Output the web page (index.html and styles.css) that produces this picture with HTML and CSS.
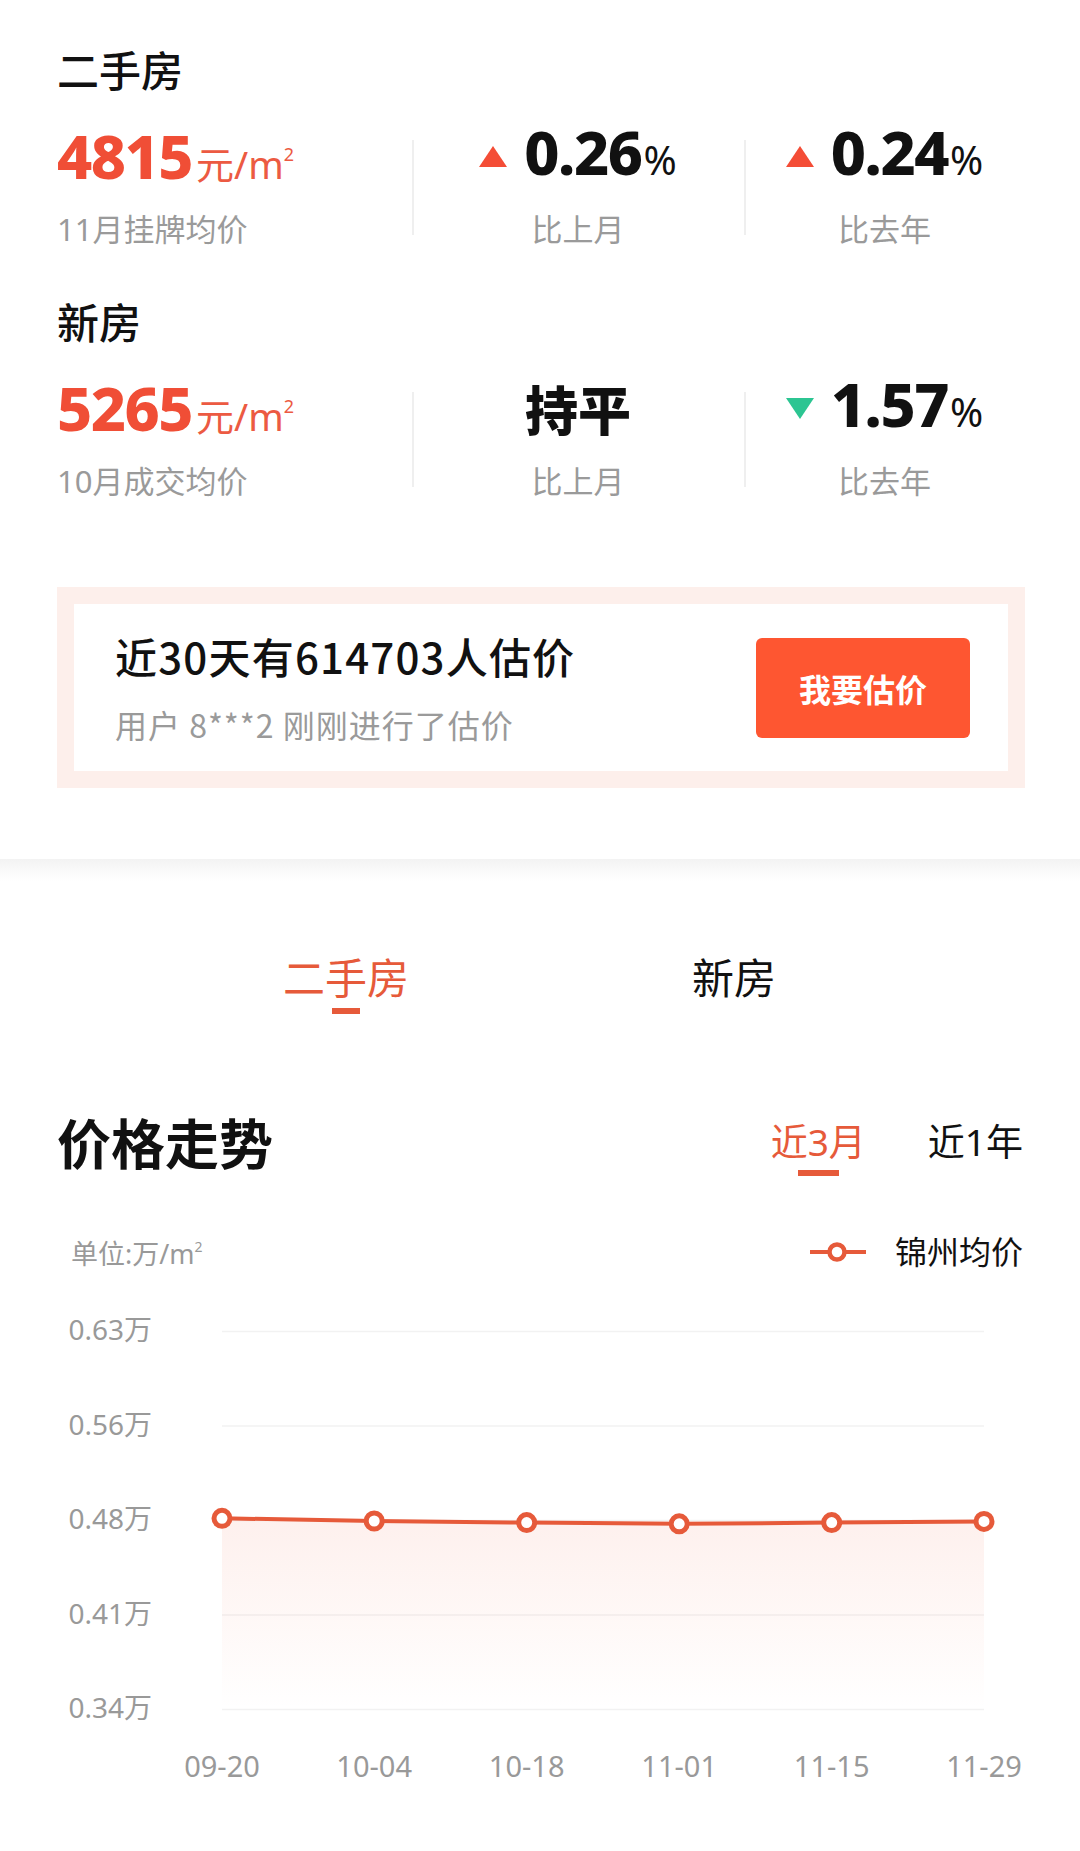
FILE: index.html
```html
<!DOCTYPE html>
<html lang="zh-CN">
<head>
  <meta charset="UTF-8" />
  <meta name="viewport" content="width=device-width, initial-scale=1.0"/>
  <title>锦州房价</title>
  <link rel="stylesheet" href="styles.css">
</head>
<body>

  <!-- 房价概览 -->
  <div class="overview">
    <h2 class="block-title">二手房</h2>
    <div class="stats">
      <div class="stat stat-main">
        <div class="value red">4815<span class="unit">元/m<sup>2</sup></span></div>
        <div class="label">11月挂牌均价</div>
      </div>
      <div class="stat">
        <div class="value">
          <svg class="arrow" width="28" height="21" viewBox="0 0 28 21"><polygon points="14,0 28,21 0,21" fill="#f44d36"/></svg>
          <span>0.26<span class="pct">%</span></span>
        </div>
        <div class="label">比上月</div>
      </div>
      <div class="stat">
        <div class="value">
          <svg class="arrow" width="28" height="21" viewBox="0 0 28 21"><polygon points="14,0 28,21 0,21" fill="#f44d36"/></svg>
          <span>0.24<span class="pct">%</span></span>
        </div>
        <div class="label">比去年</div>
      </div>
    </div>

    <h2 class="block-title">新房</h2>
    <div class="stats">
      <div class="stat stat-main">
        <div class="value red">5265<span class="unit">元/m<sup>2</sup></span></div>
        <div class="label">10月成交均价</div>
      </div>
      <div class="stat">
        <div class="value flat">持平</div>
        <div class="label">比上月</div>
      </div>
      <div class="stat">
        <div class="value">
          <svg class="arrow" width="28" height="21" viewBox="0 0 28 21"><polygon points="0,0 28,0 14,21" fill="#2cc592"/></svg>
          <span>1.57<span class="pct">%</span></span>
        </div>
        <div class="label">比去年</div>
      </div>
    </div>

    <div class="estimate">
      <div class="estimate-inner">
        <div class="estimate-text">
          <div class="estimate-title">近30天有614703人估价</div>
          <div class="estimate-sub">用户 8***2 刚刚进行了估价</div>
        </div>
        <button class="estimate-btn">我要估价</button>
      </div>
    </div>
  </div>

  <div class="band"></div>

  <!-- 房源类型 -->
  <div class="tabs">
    <div class="tab active">二手房<i class="bar"></i></div>
    <div class="tab">新房</div>
  </div>

  <!-- 价格走势 -->
  <div class="trend">
    <div class="trend-head">
      <h2 class="trend-title">价格走势</h2>
      <div class="range">
        <div class="range-item active">近3月<i class="bar"></i></div>
        <div class="range-item">近1年</div>
      </div>
    </div>
    <div class="chart-meta">
      <span class="unit-note">单位:万/m<sup>2</sup></span>
      <span class="legend">
        <svg width="56" height="22" viewBox="0 0 56 22">
          <line x1="0" y1="11" x2="56" y2="11" stroke="#e65a3a" stroke-width="4"/>
          <circle cx="27" cy="11" r="7.5" fill="#fff" stroke="#e65a3a" stroke-width="4.5"/>
        </svg>
        锦州均价
      </span>
    </div>
  </div>

  <svg class="chart" width="1080" height="500" viewBox="0 0 1080 500">
    <defs>
      <linearGradient id="area" x1="0" y1="0" x2="0" y2="1">
        <stop offset="0" stop-color="#f25a3a" stop-opacity="0.09"/>
        <stop offset="1" stop-color="#f25a3a" stop-opacity="0"/>
      </linearGradient>
    </defs>

    <g class="grid">
      <line x1="222" y1="31.5" x2="984" y2="31.5"/>
      <line x1="222" y1="126" x2="984" y2="126"/>
      <line x1="222" y1="220.5" x2="984" y2="220.5"/>
      <line x1="222" y1="315" x2="984" y2="315"/>
      <line x1="222" y1="409.5" x2="984" y2="409.5"/>
    </g>

    <g class="axis-y">
      <text x="152" y="40">0.63万</text>
      <text x="152" y="134.5">0.56万</text>
      <text x="152" y="229">0.48万</text>
      <text x="152" y="323.5">0.41万</text>
      <text x="152" y="418">0.34万</text>
    </g>

    <polygon fill="url(#area)" points="222,218.3 374.2,221 526.7,222.6 679.2,223.8 831.7,222.6 984,221.4 984,409.5 222,409.5"/>
    <polyline class="line" points="222,218.3 374.2,221 526.7,222.6 679.2,223.8 831.7,222.6 984,221.4"/>
    <g class="dots">
      <circle cx="222" cy="218.3" r="8"/>
      <circle cx="374.2" cy="221" r="8"/>
      <circle cx="526.7" cy="222.6" r="8"/>
      <circle cx="679.2" cy="223.8" r="8"/>
      <circle cx="831.7" cy="222.6" r="8"/>
      <circle cx="984" cy="221.4" r="8"/>
    </g>

    <g class="axis-x">
      <text x="222" y="477">09-20</text>
      <text x="374.2" y="477">10-04</text>
      <text x="526.7" y="477">10-18</text>
      <text x="679.2" y="477">11-01</text>
      <text x="831.7" y="477">11-15</text>
      <text x="984" y="477">11-29</text>
    </g>
  </svg>

</body>
</html>
```

FILE: styles.css
```css
body {
  margin: 0;
  padding: 0;
  background: #fff;
  color: #111;
  font-family: "Noto Sans", "Noto Sans CJK SC", sans-serif;
}

.overview {
  padding: 50px 55px 0 57px;
}

.block-title {
  margin: 0 0 34px;
  font-size: 42px;
  line-height: 42px;
  font-weight: 500;
  color: #111;
}

.stats {
  display: grid;
  grid-template-columns: 355px 332px 1fr;
  margin-bottom: 57px;
}

.stat {
  text-align: center;
  background: linear-gradient(#efefef, #efefef) left 14px / 2px 95px no-repeat;
}

.stat-main {
  text-align: left;
  background: none;
}

.value {
  display: inline-flex;
  align-items: center;
  gap: 17px;
  height: 60px;
  font-size: 61px;
  line-height: 60px;
  font-weight: 800;
  letter-spacing: -1.5px;
  color: #111;
}

.value.red {
  align-items: baseline;
  gap: 0;
  color: #f04e36;
}

.value .unit {
  margin-left: 4px;
  font-size: 38px;
  font-weight: 400;
  letter-spacing: 0;
  color: #ec5a42;
}

.value .unit sup {
  font-size: 18px;
  vertical-align: 18px;
  line-height: 0;
}

.value .pct {
  margin-left: 2px;
  font-size: 40px;
  font-weight: 400;
  letter-spacing: 0;
}

.value.flat {
  font-family: "Noto Sans CJK SC", sans-serif;
  font-size: 53px;
  font-weight: 900;
  letter-spacing: 0;
}

.label {
  margin-top: 28px;
  font-size: 31px;
  line-height: 31px;
  color: #9a9a9a;
}

/* 估价卡片 */
.estimate {
  margin-top: 90px;
  background: #fdefeb;
  padding: 17px;
}

.estimate-inner {
  display: flex;
  align-items: center;
  justify-content: space-between;
  background: #fff;
  height: 167px;
  padding: 0 38px 0 41px;
}

.estimate-title {
  font-size: 42px;
  line-height: 42px;
  font-weight: 500;
  letter-spacing: 1.2px;
  font-family: "Noto Sans CJK SC", sans-serif;
  color: #111;
}

.estimate-sub {
  margin-top: 31px;
  font-size: 32px;
  line-height: 32px;
  letter-spacing: 1px;
  font-family: "Noto Sans CJK SC", sans-serif;
  color: #9a9a9a;
}

.estimate-btn {
  width: 214px;
  height: 100px;
  border: none;
  border-radius: 6px;
  background: #fe5631;
  color: #fff;
  font-family: "Noto Sans CJK SC", sans-serif;
  font-size: 32px;
  font-weight: 700;
  cursor: pointer;
}

.band {
  margin-top: 71px;
  height: 22px;
  background: linear-gradient(#f3f3f3, #fff);
}

/* 二手房 / 新房 */
.tabs {
  display: flex;
  justify-content: center;
  padding-top: 76px;
}

.tab {
  width: 388px;
  display: flex;
  flex-direction: column;
  align-items: center;
  font-size: 42px;
  line-height: 42px;
  color: #111;
}

.tab.active,
.range-item.active {
  color: #e65a3a;
}

.tab .bar {
  display: block;
  width: 28px;
  height: 6px;
  margin-top: 9px;
  background: #e65a3a;
}

/* 价格走势 */
.trend {
  padding: 103px 57px 0 57px;
}

.trend-head {
  display: flex;
  justify-content: space-between;
  align-items: flex-start;
}

.trend-title {
  margin: 0;
  font-size: 54px;
  line-height: 54px;
  font-weight: 700;
  color: #111;
}

.range {
  display: flex;
  gap: 62px;
  margin-top: 6px;
}

.range-item {
  display: flex;
  flex-direction: column;
  align-items: center;
  font-size: 37px;
  line-height: 37px;
  color: #111;
}

.range-item .bar {
  display: block;
  width: 41px;
  height: 6px;
  margin-top: 10px;
  background: #e65a3a;
}

.chart-meta {
  display: flex;
  justify-content: space-between;
  align-items: center;
  margin-top: 60px;
  height: 32px;
}

.unit-note {
  margin-left: 14px;
  font-size: 27px;
  color: #999;
}

.unit-note sup {
  font-size: 14px;
  vertical-align: 12px;
  line-height: 0;
}

.legend {
  display: flex;
  align-items: center;
  gap: 29px;
  font-size: 32px;
  line-height: 32px;
  color: #111;
}

.chart {
  display: block;
  margin-top: 32px;
}

.grid line {
  stroke: #f2f2f2;
  stroke-width: 1.5;
}

.axis-y text,
.axis-x text {
  font-family: "Noto Sans", "Noto Sans CJK SC", sans-serif;
  font-size: 28px;
  fill: #999;
}

.axis-y text {
  text-anchor: end;
}

.axis-x text {
  text-anchor: middle;
  font-size: 29px;
}

.line {
  fill: none;
  stroke: #e65a3a;
  stroke-width: 4;
}

.dots circle {
  fill: #fff;
  stroke: #e65a3a;
  stroke-width: 5;
}
```
